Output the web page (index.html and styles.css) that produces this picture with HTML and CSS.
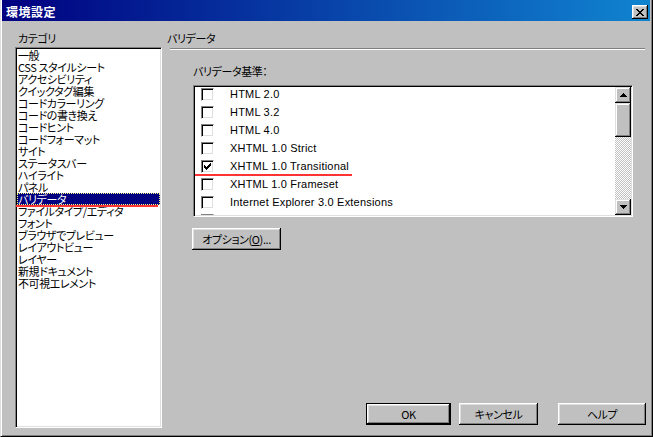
FILE: index.html
```html
<!DOCTYPE html>
<html lang="ja">
<head>
<meta charset="utf-8">
<title>環境設定</title>
<link rel="stylesheet" href="styles.css">
</head>
<body>
<div class="window">
  <div class="titlebar">
    <span class="title">環境設定</span>
    <span class="close-btn"><svg width="8" height="7" viewBox="0 0 8 7" shape-rendering="crispEdges"><path d="M0 0h2v1H0zM6 0h2v1H6zM1 1h2v1H1zM5 1h2v1H5zM2 2h4v1H2zM3 3h2v1H3zM2 4h4v1H2zM1 5h2v1H1zM5 5h2v1H5zM0 6h2v1H0zM6 6h2v1H6z" fill="#000"/></svg></span>
  </div>
  <div class="main">
    <div class="category">
      <div class="cat-label">カテゴリ</div>
      <ul class="cat-list">
        <li>一般</li>
        <li>CSS スタイルシート</li>
        <li>アクセシビリティ</li>
        <li>クイックタグ編集</li>
        <li>コードカラーリング</li>
        <li>コードの書き換え</li>
        <li>コードヒント</li>
        <li>コードフォーマット</li>
        <li>サイト</li>
        <li>ステータスバー</li>
        <li>ハイライト</li>
        <li>パネル</li>
        <li class="selected">バリデータ</li>
        <li>ファイルタイプ/エディタ</li>
        <li>フォント</li>
        <li>ブラウザでプレビュー</li>
        <li>レイアウトビュー</li>
        <li>レイヤー</li>
        <li>新規ドキュメント</li>
        <li>不可視エレメント</li>
      </ul>
    </div>
    <div class="panel">
      <div class="panel-title">バリデータ</div>
      <div class="separator"></div>
      <div class="panel-body">
        <div class="field-label">バリデータ基準：</div>
        <div class="listbox">
          <ul class="options">
            <li><span class="checkbox"></span><span class="opt-text">HTML 2.0</span></li>
            <li><span class="checkbox"></span><span class="opt-text">HTML 3.2</span></li>
            <li><span class="checkbox"></span><span class="opt-text">HTML 4.0</span></li>
            <li><span class="checkbox"></span><span class="opt-text">XHTML 1.0 Strict</span></li>
            <li class="marked"><span class="checkbox"><svg width="7" height="7" viewBox="0 0 7 7" shape-rendering="crispEdges"><path d="M6 0h1v1H6zM5 1h2v1H5zM0 2h1v1H0zM4 2h3v1H4zM0 3h2v1H0zM3 3h3v1H3zM0 4h5v1H0zM1 5h3v1H1zM2 6h1v1H2z" fill="#000"/></svg></span><span class="opt-text">XHTML 1.0 Transitional</span></li>
            <li><span class="checkbox"></span><span class="opt-text">XHTML 1.0 Frameset</span></li>
            <li><span class="checkbox"></span><span class="opt-text">Internet Explorer 3.0 Extensions</span></li>
            <li><span class="checkbox"></span><span class="opt-text">Internet Explorer 4.0 Extensions</span></li>
          </ul>
          <div class="scrollbar">
            <div class="sb-btn"><svg width="7" height="4" viewBox="0 0 7 4" shape-rendering="crispEdges"><path d="M3 0h1v1H3zM2 1h3v1H2zM1 2h5v1H1zM0 3h7v1H0z" fill="#000"/></svg></div>
            <div class="sb-thumb"></div>
            <div class="sb-track"></div>
            <div class="sb-btn"><svg width="7" height="4" viewBox="0 0 7 4" shape-rendering="crispEdges"><path d="M0 0h7v1H0zM1 1h5v1H1zM2 2h3v1H2zM3 3h1v1H3z" fill="#000"/></svg></div>
          </div>
        </div>
        <button class="btn opt-btn">オプション(<u>O</u>)...</button>
      </div>
      <div class="footer">
        <button class="btn default ok">OK</button>
        <button class="btn cancel">キャンセル</button>
        <button class="btn help">ヘルプ</button>
      </div>
    </div>
  </div>
</div>
</body>
</html>
```

FILE: styles.css
```css
* { box-sizing: border-box; }

body {
  margin: 0;
  background: #c0c0c0;
  font-family: "Noto Sans CJK JP", sans-serif;
  font-size: 11px;
  letter-spacing: -0.4px;
  font-feature-settings: "palt";
  color: #000;
}

.window {
  width: 653px;
  height: 437px;
  background: #c0c0c0;
  border-left: 1px solid #dfdfdf;
  border-right: 1px solid #000;
  border-bottom: 1px solid #000;
  box-shadow: inset 1px 0 #fff, inset -1px -1px #808080;
  padding: 0 2px 1px 1px;
  display: flex;
  flex-direction: column;
}

.titlebar {
  height: 21px;
  padding: 3px 2px 0 2px;
  background: linear-gradient(to right, #000080, #1084d0);
  display: flex;
  align-items: center;
  justify-content: space-between;
}

.title {
  color: #fff;
  font-weight: bold;
  font-size: 12px;
  letter-spacing: 0.5px;
  line-height: 14px;
  padding-left: 2px;
}

.close-btn {
  width: 16px;
  height: 14px;
  background: #c0c0c0;
  box-shadow: inset -1px -1px #000, inset 1px 1px #fff, inset -2px -2px #808080, inset 2px 2px #dfdfdf;
  display: flex;
  align-items: center;
  justify-content: center;
  padding-right: 1px;
}

.main {
  flex: 1;
  display: flex;
  min-height: 0;
}

.category {
  width: 160px;
  padding-left: 13px;
  padding-bottom: 7px;
  display: flex;
  flex-direction: column;
}

.cat-label {
  margin-top: 11px;
  line-height: 12px;
  height: 12px;
  padding-left: 3px;
}

.cat-list {
  list-style: none;
  margin: 3px 0 0 0;
  padding: 1px;
  flex: 1;
  background: #fff;
  border: 1px solid;
  border-color: #808080 #fff #fff #808080;
  box-shadow: inset 1px 1px #000, inset -1px -1px #dfdfdf;
}

.cat-list li {
  height: 12px;
  line-height: 12px;
  padding-left: 1px;
  white-space: nowrap;
}

.cat-list li.selected {
  position: relative;
  background: #000080;
  color: #fff;
  outline: 1px dotted #ffff80;
  outline-offset: -1px;
}

.cat-list li.selected::after {
  content: "";
  position: absolute;
  left: -1px;
  width: 142px;
  top: 12px;
  height: 2px;
  background: #ff3333;
}

.panel {
  flex: 1;
  display: flex;
  flex-direction: column;
  padding-bottom: 10px;
}

.panel-title {
  margin-top: 11px;
  height: 12px;
  line-height: 12px;
  padding-left: 5px;
}

.separator {
  margin: 4px 5px 0 8px;
  height: 2px;
  border-top: 1px solid #808080;
  border-bottom: 1px solid #fff;
}

.panel-body {
  padding-left: 31px;
  display: flex;
  flex-direction: column;
  align-items: flex-start;
}

.field-label {
  margin-top: 15px;
  height: 12px;
  line-height: 12px;
}

.listbox {
  margin-top: 8px;
  width: 440px;
  height: 132px;
  background: #fff;
  border: 1px solid;
  border-color: #808080 #fff #fff #808080;
  box-shadow: inset 1px 1px #000, inset -1px -1px #dfdfdf;
  padding: 1px;
  display: flex;
}

.options {
  list-style: none;
  margin: 0;
  padding: 0;
  flex: 1;
  overflow: hidden;
}

.options li {
  height: 18px;
  display: flex;
  align-items: flex-start;
  font-family: "Liberation Sans", sans-serif;
  font-size: 11px;
  letter-spacing: 0.2px;
  white-space: nowrap;
}

.options li.marked {
  position: relative;
}

.options li.marked::after {
  content: "";
  position: absolute;
  left: -1px;
  width: 158px;
  top: 15px;
  height: 2px;
  background: #ff3333;
}

.checkbox {
  width: 13px;
  height: 13px;
  margin: 1px 0 0 6px;
  background: #fff;
  border: 1px solid;
  border-color: #808080 #fff #fff #808080;
  box-shadow: inset 1px 1px #000, inset -1px -1px #dfdfdf;
  padding: 2px;
  display: flex;
  flex: none;
}

.opt-text {
  margin-left: 16px;
  line-height: 15px;
}

.scrollbar {
  width: 16px;
  display: flex;
  flex-direction: column;
}

.sb-btn {
  height: 16px;
  background: #c0c0c0;
  box-shadow: inset -1px -1px #000, inset 1px 1px #dfdfdf, inset -2px -2px #808080, inset 2px 2px #fff;
  display: flex;
  align-items: center;
  justify-content: center;
}

.sb-thumb {
  height: 34px;
  background: #c0c0c0;
  box-shadow: inset -1px -1px #000, inset 1px 1px #dfdfdf, inset -2px -2px #808080, inset 2px 2px #fff;
}

.sb-track {
  flex: 1;
  background: repeating-conic-gradient(#c0c0c0 0 25%, #fff 0 50%) 0 0 / 2px 2px;
}

.btn {
  font-family: "Noto Sans CJK JP", sans-serif;
  font-size: 11px;
  letter-spacing: -0.4px;
  font-feature-settings: "palt";
  color: #000;
  background: #c0c0c0;
  border: none;
  padding: 0;
  height: 22px;
  box-shadow: inset -1px -1px #000, inset 1px 1px #fff, inset -2px -2px #808080, inset 2px 2px #dfdfdf;
}

.btn.default {
  border: 1px solid #000;
}

.opt-btn {
  margin-top: 11px;
  margin-left: -1px;
  width: 89px;
}

.opt-btn u {
  text-underline-offset: 1px;
}

.footer {
  margin-top: auto;
  display: flex;
  justify-content: flex-end;
  padding-right: 4px;
}

.ok { width: 85px; }
.cancel { width: 79px; margin-left: 8px; }
.help { width: 88px; margin-left: 20px; }
```
